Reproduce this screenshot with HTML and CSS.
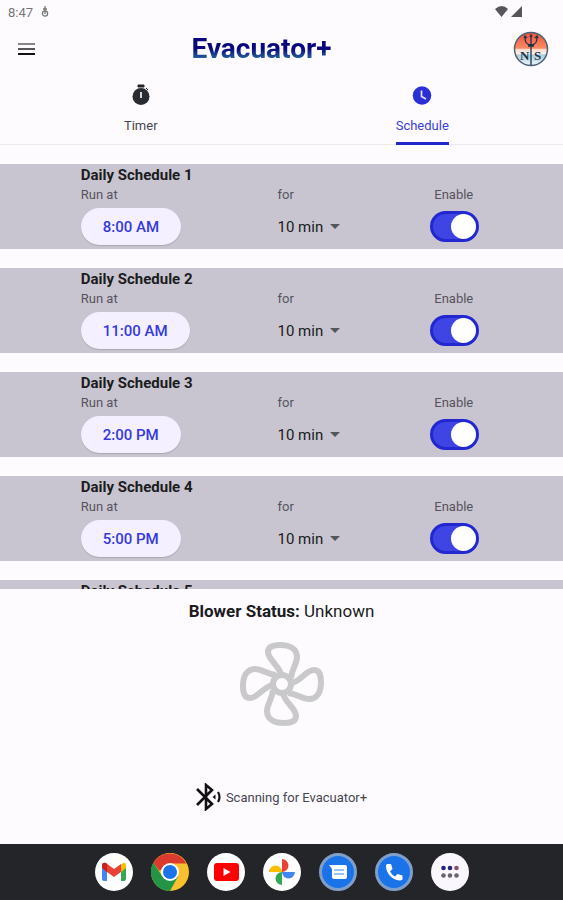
FILE: index.html
```html
<!DOCTYPE html>
<html lang="en">
<head>
  <meta charset="utf-8">
  <meta name="viewport" content="width=device-width, initial-scale=1">
  <title>Evacuator+</title>
  <link rel="stylesheet" href="styles.css">
</head>
<body>
  <div class="status-bar">
    <span class="clock">8:47</span>
    <svg class="status-app" width="8" height="12" viewBox="0 0 8 12" fill="none" stroke="#777" stroke-width="1.300"><circle cx="4" cy="7.500" r="2.600"/><path d="M4 0v8M2 3h4"/></svg>
    <svg class="status-signal" width="28" height="14" viewBox="0 0 28 14" fill="#55555a"><path d="M0 4q7-6 13 0L6.500 12z"/><path d="M27 1v11H16z"/></svg>
  </div>

  <header class="app-bar">
    <button class="menu-button" aria-label="Menu">
      <svg width="18" height="14" viewBox="0 0 18 14"><path d="M0 2h17" stroke="#858585" stroke-width="2"/><path d="M0 7h17" stroke="#555" stroke-width="2"/><path d="M0 12h17" stroke="#111" stroke-width="2"/></svg>
    </button>
    <h1><span class="wordmark">Evacuator+</span></h1>
    <svg class="brand" width="36" height="36" viewBox="0 0 36 36">
      <defs><linearGradient id="sunset" x1="0" y1="0" x2="0" y2="1"><stop offset="0" stop-color="#f0513f"/><stop offset=".48" stop-color="#fa8a62"/><stop offset=".5" stop-color="#fbd9c8"/><stop offset=".64" stop-color="#f6efec"/><stop offset=".68" stop-color="#a9cfdc"/><stop offset="1" stop-color="#eef6fa"/></linearGradient></defs>
      <circle cx="18" cy="18" r="16.500" fill="url(#sunset)" stroke="#4d6274" stroke-width="1.500"/>
      <path d="M18 5v29M12 6c0 5 1 8 6 8s6-3 6-8M15 15h6M11 7l1-2 2 2M17 6l1-2 1 2M22 7l2-2 1 2" fill="none" stroke="#1d3349" stroke-width="1.300"/>
      <text x="7" y="29" class="brand-text">N</text>
      <text x="21" y="29" class="brand-text">S</text>
    </svg>
  </header>

  <nav class="tabs" role="tablist">
    <button class="tab" role="tab" aria-selected="false">
      <svg width="20" height="22" viewBox="0 0 20 22"><path d="M7 1h6v2H7zM15 4l2 2" fill="#222328" stroke="#222328"/><circle cx="10" cy="12.500" r="8.500" fill="#2b2c32"/><path d="M9 8h2v6H9z" fill="#d5d5da"/></svg>
      <span class="tab-label">Timer</span>
    </button>
    <button class="tab active" role="tab" aria-selected="true">
      <svg width="20" height="22" viewBox="0 0 20 22"><circle cx="10" cy="11.500" r="9.300" fill="#2b30d6"/><path d="M9.500 6.500v6l4.500 2.500" fill="none" stroke="#e0e0ff" stroke-width="1.700"/></svg>
      <span class="tab-label">Schedule</span>
    </button>
  </nav>

  <main class="schedules">
    <section class="schedule">
      <div class="field field-time">
        <h2>Daily Schedule 1</h2>
        <label for="time1">Run at</label>
        <button class="time" id="time1">8:00 AM</button>
      </div>
      <div class="field field-duration">
        <label for="duration1">for</label>
        <div class="select-box">
          <select id="duration1"><option>10 min</option></select>
          <svg class="arrow" width="10" height="5" viewBox="0 0 10 5"><path d="M0 0h10L5 5z" fill="#55555c"/></svg>
        </div>
      </div>
      <div class="field field-enable">
        <label for="enable1">Enable</label>
        <input type="checkbox" class="switch" id="enable1" checked>
      </div>
    </section>

    <section class="schedule">
      <div class="field field-time">
        <h2>Daily Schedule 2</h2>
        <label for="time2">Run at</label>
        <button class="time" id="time2">11:00 AM</button>
      </div>
      <div class="field field-duration">
        <label for="duration2">for</label>
        <div class="select-box">
          <select id="duration2"><option>10 min</option></select>
          <svg class="arrow" width="10" height="5" viewBox="0 0 10 5"><path d="M0 0h10L5 5z" fill="#55555c"/></svg>
        </div>
      </div>
      <div class="field field-enable">
        <label for="enable2">Enable</label>
        <input type="checkbox" class="switch" id="enable2" checked>
      </div>
    </section>

    <section class="schedule">
      <div class="field field-time">
        <h2>Daily Schedule 3</h2>
        <label for="time3">Run at</label>
        <button class="time" id="time3">2:00 PM</button>
      </div>
      <div class="field field-duration">
        <label for="duration3">for</label>
        <div class="select-box">
          <select id="duration3"><option>10 min</option></select>
          <svg class="arrow" width="10" height="5" viewBox="0 0 10 5"><path d="M0 0h10L5 5z" fill="#55555c"/></svg>
        </div>
      </div>
      <div class="field field-enable">
        <label for="enable3">Enable</label>
        <input type="checkbox" class="switch" id="enable3" checked>
      </div>
    </section>

    <section class="schedule">
      <div class="field field-time">
        <h2>Daily Schedule 4</h2>
        <label for="time4">Run at</label>
        <button class="time" id="time4">5:00 PM</button>
      </div>
      <div class="field field-duration">
        <label for="duration4">for</label>
        <div class="select-box">
          <select id="duration4"><option>10 min</option></select>
          <svg class="arrow" width="10" height="5" viewBox="0 0 10 5"><path d="M0 0h10L5 5z" fill="#55555c"/></svg>
        </div>
      </div>
      <div class="field field-enable">
        <label for="enable4">Enable</label>
        <input type="checkbox" class="switch" id="enable4" checked>
      </div>
    </section>

    <section class="schedule">
      <div class="field field-time">
        <h2>Daily Schedule 5</h2>
      </div>
      <div class="field field-duration"></div>
      <div class="field field-enable"></div>
    </section>
  </main>

  <section class="blower">
    <p class="blower-status"><b>Blower Status:</b> Unknown</p>
    <svg class="fan" width="86" height="86" viewBox="0 0 86 86" fill="none" stroke="#c9c8ca" stroke-width="6" stroke-linejoin="round">
      <circle cx="43" cy="43" r="9"/>
      <path id="blade" d="M42 34C41 25 29 19 29 11C29 6 34 4 41 4C51 4 58 8 58 16C58 23 53 27 52 37"/>
      <use href="#blade" transform="rotate(90 43 43)"/>
      <use href="#blade" transform="rotate(180 43 43)"/>
      <use href="#blade" transform="rotate(270 43 43)"/>
    </svg>
    <p class="scanning">
      <svg width="26" height="28" viewBox="0 0 26 28" fill="none" stroke="#111" stroke-width="2.600"><path d="M1 6l15 15-6 5V2l6 5L1 22"/><path d="M22 9q3 5 0 10" stroke-width="2.200"/><path d="M16.500 14l3-2.500v5z" fill="#111" stroke="none"/></svg>
      Scanning for Evacuator+
    </p>
  </section>

  <footer class="dock">
    <a href="#" aria-label="Gmail">
      <svg width="38" height="38" viewBox="0 0 38 38"><circle cx="19" cy="19" r="19" fill="#fff"/><path d="M7 13v13q0 2 2 2h3V16z" fill="#4285f4"/><path d="M31 13v13q0 2-2 2h-3V16z" fill="#34a853"/><path d="M26 12l2-2q3-1 3 3v2l-5 4z" fill="#fbbc04"/><path d="M7 15v-2q0-4 4-3l8 6 7-5v8l-7 5-7-5z" fill="#ea4335"/><path d="M7 15v-2q0-4 4-3l1 1v8z" fill="#c5221f"/></svg>
    </a>
    <a href="#" aria-label="Chrome">
      <svg width="38" height="38" viewBox="0 0 38 38"><circle cx="19" cy="19" r="19" fill="#fbc02d"/><path d="M2.500 9.500A19 19 0 0 0 19 38l8-14.500-8-4.500-8 4z" fill="#249447"/><path d="M2.500 9.500A19 19 0 0 1 35.500 10.500H19l-8 6-3 1z" fill="#db3a2e"/><circle cx="19" cy="19" r="9" fill="#fff"/><circle cx="19" cy="19" r="7" fill="#1a73e8"/></svg>
    </a>
    <a href="#" aria-label="YouTube">
      <svg width="38" height="38" viewBox="0 0 38 38"><circle cx="19" cy="19" r="19" fill="#fff"/><rect x="7" y="10" width="25" height="18" rx="3" fill="#f00"/><path d="M16.500 15v8l7-4z" fill="#fff"/></svg>
    </a>
    <a href="#" aria-label="Photos">
      <svg width="38" height="38" viewBox="0 0 38 38"><circle cx="19" cy="19" r="19" fill="#fff"/><path d="M19 19V6a6.500 6.500 0 0 1 0 13z" fill="#ea4335"/><path d="M19 19h13a6.500 6.500 0 0 1-13 0z" fill="#4285f4"/><path d="M19 19v13a6.500 6.500 0 0 1 0-13z" fill="#34a853"/><path d="M19 19H6a6.500 6.500 0 0 1 13 0z" fill="#fbbc04"/></svg>
    </a>
    <a href="#" aria-label="Messages">
      <svg width="38" height="38" viewBox="0 0 38 38"><circle cx="19" cy="19" r="17.500" fill="#1a73e8" stroke="#7f9fca" stroke-width="3"/><path d="M10 12h16q2 0 2 2v10q0 2-2 2H15q-2 0-2-2v-8z" fill="#fff"/><path d="M15 17h10M15 21h10" stroke="#7eaef1" stroke-width="1.500"/></svg>
    </a>
    <a href="#" aria-label="Phone">
      <svg width="38" height="38" viewBox="0 0 38 38"><circle cx="19" cy="19" r="17.500" fill="#1a73e8" stroke="#7f9fca" stroke-width="3"/><path d="M12 11h4l1.500 5-2.500 2.500q2 3.500 5 5l2.500-2.500 5 1.500v4q-1 1-3 1C17 27 11 20 11 13q0-1 1-2z" fill="#fff"/></svg>
    </a>
    <a href="#" aria-label="All apps">
      <svg width="38" height="38" viewBox="0 0 38 38"><circle cx="19" cy="19" r="19" fill="#faf7ff"/><g fill="#25257c"><circle cx="12.500" cy="15" r="2.300"/><circle cx="19" cy="15" r="2.300"/></g><circle cx="25.500" cy="15" r="2.300" fill="#8b5264"/><g fill="#66656f"><circle cx="12.500" cy="22.500" r="2.300"/><circle cx="19" cy="22.500" r="2.300"/><circle cx="25.500" cy="22.500" r="2.300"/></g></svg>
    </a>
  </footer>
</body>
</html>
```
FILE: styles.css
```css
* {
  box-sizing: border-box;
}

body {
  display: flex;
  flex-direction: column;
  height: 100vh;
  margin: 0;
  font-family: Roboto, "Liberation Sans", sans-serif;
  font-size: 13px;
  color: #1b1b20;
  background-color: #fefbff;
}

h1,
h2,
p {
  margin: 0;
}

button,
select {
  padding: 0;
  border: none;
  background: none;
  font-family: inherit;
  cursor: pointer;
}

svg {
  display: block;
}

/* Top of the screen */
.status-bar {
  display: flex;
  align-items: center;
  gap: 8px;
  height: 24px;
  padding: 0 40px 0 8px;
  color: #77767c;
}

.status-signal {
  margin-left: auto;
}

.app-bar {
  display: flex;
  align-items: center;
  height: 50px;
  padding: 0 14px 0 18px;
}

.menu-button {
  width: 36px;
}

h1 {
  flex: 1;
  padding-right: 44px;
  font-family: "Liberation Sans Narrow", Roboto, sans-serif;
  font-size: 28px;
  line-height: 32px;
  text-align: center;
}

.wordmark {
  color: transparent;
  background: linear-gradient(#08087c 50%, #2f7fa8 90%);
  background-clip: text;
  -webkit-background-clip: text;
}

.brand-text {
  font: bold 13px "Liberation Serif", serif;
  fill: #1d3349;
}

.tabs {
  display: flex;
  height: 71px;
  box-shadow: inset 0 -1px #ebe8ee;
}

.tab {
  display: flex;
  flex: 1;
  flex-direction: column;
  align-items: center;
  padding-top: 10px;
  font-size: 13px;
  color: #46464f;
}

.tab-label {
  height: 39px;
  padding-top: 12px;
  line-height: 16px;
}

.tab.active {
  color: #3b40dc;
}

.tab.active .tab-label {
  border-bottom: 3px solid #2226cf;
}

/* Schedules */
.schedules {
  display: flex;
  flex: 1;
  flex-direction: column;
  gap: 19px;
  min-height: 0;
  padding-top: 19px;
  overflow: hidden;
}

.schedule {
  display: flex;
  flex: none;
  align-items: flex-end;
  justify-content: space-evenly;
  padding: 1px 0 4px;
  background-color: #c8c5d0;
}

.field {
  display: flex;
  flex-direction: column;
  align-items: flex-start;
  line-height: 20px;
}

.field-time {
  width: 116px;
}

.field-duration {
  width: 72px;
}

.field-enable {
  width: 52px;
}

.field label {
  margin-bottom: 3px;
  color: #55545d;
}

.field-enable label {
  padding-left: 4px;
}

h2 {
  font-size: 15px;
  line-height: 20px;
  white-space: nowrap;
}

.time {
  height: 37px;
  padding: 0 22px;
  border-radius: 19px;
  font-size: 15px;
  font-weight: 500;
  color: #343adc;
  background-color: #f5f0ff;
  box-shadow: 0 1px 1px #aaa7b2;
}

.select-box {
  display: flex;
  align-items: center;
  gap: 6px;
  height: 37px;
}

.select-box select {
  appearance: none;
  font-size: 15px;
  color: #1b1b20;
}

.arrow {
  pointer-events: none;
}

.switch {
  appearance: none;
  width: 49px;
  height: 31px;
  margin: 3px 0;
  border: 3px solid #2227d2;
  border-radius: 16px;
  background-color: #3f45e3;
  cursor: pointer;
}

.switch::before {
  content: "";
  display: block;
  width: 25px;
  height: 25px;
  border-radius: 50%;
  background-color: #fff;
}

.switch:checked::before {
  margin-left: auto;
}

/* Blower */
.blower {
  display: flex;
  flex-direction: column;
  align-items: center;
  padding: 10px 0 33px;
}

.blower-status {
  font-size: 17px;
  line-height: 24px;
}

.fan {
  margin: 18px 0 56px;
}

.scanning {
  display: flex;
  align-items: center;
  gap: 4px;
  color: #46464f;
}

.dock {
  display: flex;
  align-items: center;
  justify-content: center;
  gap: 18px;
  height: 56px;
  background-color: #242529;
}
```
